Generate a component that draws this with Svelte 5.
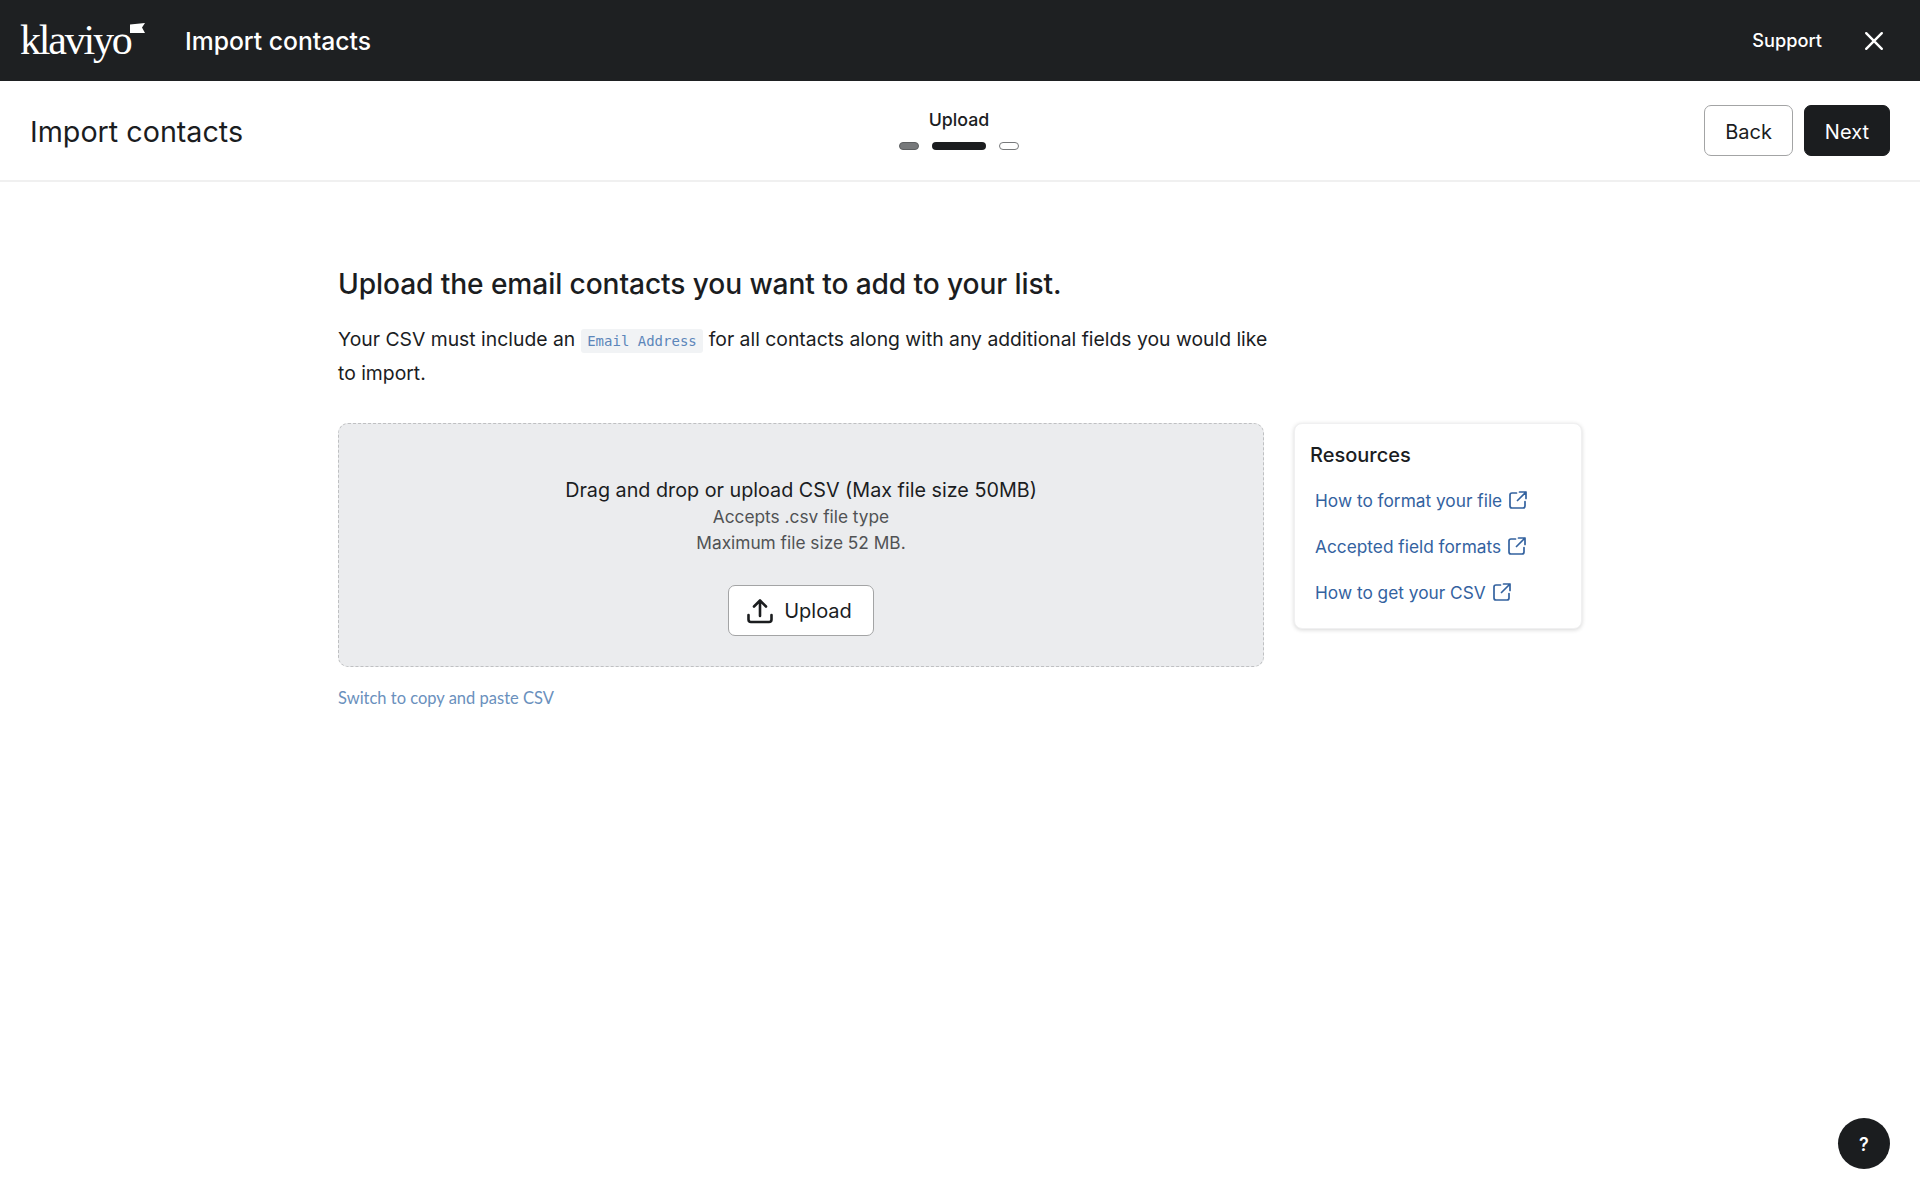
<script lang="ts">
  const resources = [
    "How to format your file",
    "Accepted field formats",
    "How to get your CSV",
  ];
</script>

<div class="page">
  <header class="topbar">
    <div class="brand">
      <span class="logo">klaviyo</span>
      <svg class="flag" width="16" height="11" viewBox="0 0 16 11" aria-hidden="true">
        <path d="M0 1.5L15 0L12 4.5L15 10H0Z" fill="#fff" />
      </svg>
    </div>
    <span class="app-title">Import contacts</span>
    <span class="support">Support</span>
    <button class="close" aria-label="Close">
      <svg width="20" height="20" viewBox="0 0 20 20" fill="none" stroke="#fff" stroke-width="2.4" stroke-linecap="round">
        <path d="M2.2 2.2L17.8 17.8M17.8 2.2L2.2 17.8" />
      </svg>
    </button>
  </header>

  <div class="subheader">
    <h1>Import contacts</h1>
    <div class="steps">
      <span class="step-label">Upload</span>
      <div class="step-bars">
        <span class="bar done"></span>
        <span class="bar active"></span>
        <span class="bar todo"></span>
      </div>
    </div>
    <div class="actions">
      <button class="btn">Back</button>
      <button class="btn primary">Next</button>
    </div>
  </div>

  <main class="content">
    <h2>Upload the email contacts you want to add to your list.</h2>
    <p class="intro">
      Your CSV must include an <code>Email Address</code> for all contacts along with any additional fields you would like to import.
    </p>

    <div class="columns">
      <div class="left">
        <div class="dropzone">
          <div class="drop-title">Drag and drop or upload CSV (Max file size 50MB)</div>
          <div class="drop-note">Accepts .csv file type</div>
          <div class="drop-note">Maximum file size 52 MB.</div>
          <button class="btn upload">
            <svg width="28" height="28" viewBox="0 0 28 28" fill="none" stroke="#1b1d1f" stroke-width="2.6" stroke-linecap="round" stroke-linejoin="round">
              <path d="M14 19V4M8 9.5L14 3.5L20 9.5" />
              <path d="M2.5 18V22.5Q2.5 25 5 25H23Q25.5 25 25.5 22.5V18" />
            </svg>
            Upload
          </button>
        </div>
        <a class="switch" href="#switch">Switch to copy and paste CSV</a>
      </div>

      <aside class="card">
        <h3>Resources</h3>
        {#each resources as r (r)}
          <a class="res" href="#res">
            {r}
            <svg width="18" height="18" viewBox="0 0 18 18" fill="none" stroke="#33629f" stroke-width="1.7" stroke-linecap="round" stroke-linejoin="round">
              <path d="M7.5 2H3Q1 2 1 4V15Q1 17 3 17H14Q16 17 16 15V10.5" />
              <path d="M10.5 1H17V7.5M17 1L8.5 9.5" />
            </svg>
          </a>
        {/each}
      </aside>
    </div>
  </main>

  <button class="help">?</button>
</div>

<style>
  :global(body) {
    margin: 0;
    background: #fff;
    font-family: Inter, "Liberation Sans", sans-serif;
    color: #1b1d1f;
  }
  .page {
    height: 1200px;
    position: relative;
    overflow: hidden;
  }
  .topbar {
    height: 81px;
    box-sizing: border-box;
    background: #1e2022;
    color: #fff;
    display: flex;
    align-items: center;
    padding: 0 36px 0 20px;
  }
  .brand {
    width: 165px;
    display: flex;
    align-items: flex-start;
    flex: none;
    padding-bottom: 2px;
  }
  .logo {
    font-family: "Liberation Serif", serif;
    font-size: 42px;
    line-height: 50px;
    letter-spacing: -2.2px;
    color: #fff;
  }
  .flag {
    margin: 8px 0 0 -1px;
  }
  .app-title {
    font-size: 24.7px;
    font-weight: 500;
    flex: 1;
  }
  .support {
    font-size: 18.2px;
    font-weight: 500;
    margin-right: 42px;
    padding-bottom: 2px;
  }
  .close {
    background: none;
    border: none;
    padding: 0;
    height: 20px;
    cursor: pointer;
  }
  .subheader {
    height: 101px;
    box-sizing: border-box;
    border-bottom: 2px solid #f0f0f0;
    display: grid;
    grid-template-columns: 1fr auto 1fr;
    align-items: center;
    padding: 0 30px;
  }
  h1 {
    margin: 0;
    padding-top: 2px;
    font-size: 28.7px;
    font-weight: 400;
  }
  .steps {
    display: flex;
    flex-direction: column;
    align-items: center;
    gap: 11px;
    margin-right: 2px;
    padding-bottom: 2px;
  }
  .step-label {
    font-size: 17.8px;
    font-weight: 500;
    line-height: 22px;
  }
  .step-bars {
    display: flex;
    gap: 13px;
  }
  .bar {
    height: 8px;
    border-radius: 4px;
    box-sizing: border-box;
  }
  .bar.done {
    width: 20px;
    background: #77797b;
    border: 1px solid #5d5f61;
  }
  .bar.active {
    width: 54px;
    background: #1b1d1f;
  }
  .bar.todo {
    width: 20px;
    background: #fff;
    border: 1.5px solid #77797b;
  }
  .actions {
    display: flex;
    justify-content: flex-end;
    gap: 11px;
  }
  .btn {
    font: inherit;
    font-size: 20px;
    height: 51px;
    padding: 2px 20px 0;
    background: #fff;
    color: #1b1d1f;
    border: 1.5px solid #a3a4a5;
    border-radius: 7px;
    cursor: pointer;
  }
  .btn.primary {
    background: #1b1d1f;
    border-color: #1b1d1f;
    color: #fff;
  }
  .content {
    width: 1244px;
    margin: 0 auto;
    padding-top: 84px;
  }
  h2 {
    margin: 0;
    font-size: 28.15px;
    line-height: 36px;
    font-weight: 500;
    letter-spacing: -0.1px;
  }
  .intro {
    width: 940px;
    margin: 21px 0 0;
    font-size: 19.35px;
    line-height: 32px;
  }
  code {
    font-family: "DejaVu Sans Mono", monospace;
    font-size: 14px;
    color: #5c86ba;
    background: #f1f3f5;
    padding: 4px 6.5px;
    border-radius: 3px;
  }
  .columns {
    display: flex;
    align-items: flex-start;
    gap: 30px;
    margin-top: 34px;
  }
  .left {
    width: 926px;
    flex: none;
  }
  .dropzone {
    height: 244px;
    box-sizing: border-box;
    background: #ebecee;
    border: 1.5px dashed #bfc0c2;
    border-radius: 10px;
    display: flex;
    flex-direction: column;
    align-items: center;
    padding-top: 53px;
  }
  .drop-title {
    font-size: 19.75px;
    line-height: 27px;
  }
  .drop-note {
    font-size: 17.3px;
    line-height: 25.5px;
    color: #505254;
  }
  .drop-note:first-of-type {
    margin-top: 1px;
  }
  .btn.upload {
    margin-top: 30px;
    display: flex;
    align-items: center;
    gap: 10px;
    padding: 0 21px 0 17px;
    height: 51px;
  }
  .switch {
    display: block;
    margin-top: 21px;
    font-family: Lato, sans-serif;
    font-size: 16.5px;
    line-height: 20px;
    color: #6a90bd;
    text-decoration: none;
  }
  .card {
    width: 289px;
    height: 206px;
    box-sizing: border-box;
    background: #fff;
    border-radius: 8px;
    border: 1px solid #f0f0f1;
    box-shadow: 0 1px 4px rgba(0, 0, 0, 0.16);
    padding: 18px 15px;
  }
  h3 {
    margin: 0 0 8px;
    font-size: 20px;
    line-height: 27px;
    font-weight: 500;
  }
  .res {
    display: flex;
    align-items: center;
    gap: 7px;
    height: 46px;
    padding-left: 5px;
    font-size: 17.3px;
    color: #33629f;
    text-decoration: none;
  }
  .help {
    position: absolute;
    right: 30px;
    bottom: 31px;
    width: 52px;
    height: 51px;
    padding: 2px 0 0;
    border: none;
    border-radius: 50%;
    background: #1b1d1f;
    color: #fff;
    font: 600 18px Inter, sans-serif;
    cursor: pointer;
  }
</style>
